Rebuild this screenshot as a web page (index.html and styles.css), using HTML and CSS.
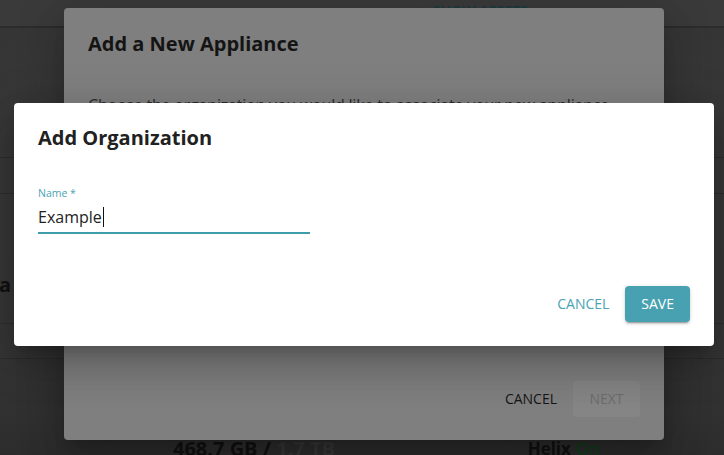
FILE: index.html
```html
<!DOCTYPE html>
<html>
<head>
<meta charset="utf-8">
<link rel="stylesheet" href="styles.css">
</head>
<body>
<div class="page">
  <div class="topbar">
    <div class="show-assets">
      <svg class="sa-icon" width="12" height="12" viewBox="0 0 12 12"><path d="M1 8 L4 5 L7 8 M5 8 L8 5 L11 8" fill="none" stroke="#1c3a3f" stroke-width="1.6"/></svg>
      <span>SHOW ASSETS</span>
    </div>
  </div>
  <div class="row row-a"></div>
  <div class="row row-b"></div>
  <div class="row row-c"><span class="section-head">a</span></div>
  <div class="row row-d"></div>
  <div class="row row-e">
    <span class="stat"><b>468.7 GB / </b><span class="muted">1.7 TB</span></span>
    <span class="helix"><b>Helix </b><span class="on">On</span></span>
  </div>
</div>

<div class="back-dialog">
  <h2 class="back-title">Add a New Appliance</h2>
  <p class="back-text">Choose the organization you would like to associate your new appliance</p>
  <div class="back-actions">
    <span class="back-cancel">CANCEL</span>
    <span class="back-next">NEXT</span>
  </div>
</div>

<div class="dialog">
  <h2 class="dialog-title">Add Organization</h2>
  <div class="dialog-body">
    <div class="field">
      <label class="field-label">Name *</label>
      <div class="field-input"><span class="value">Example</span><span class="caret"></span></div>
    </div>
  </div>
  <div class="dialog-actions">
    <span class="btn-text">CANCEL</span>
    <span class="btn-save">SAVE</span>
  </div>
</div>
</body>
</html>
```
FILE: styles.css
```css
* { box-sizing: border-box; }
html, body { margin: 0; padding: 0; }
body {
  width: 724px;
  height: 455px;
  overflow: hidden;
  position: relative;
  font-family: "Open Sans", "Noto Sans", sans-serif;
  background: radial-gradient(ellipse 70% 80% at 50% 45%, #404040 0%, #3a3a3a 60%, #323232 100%);
}
.page { width: 724px; height: 455px; display: flex; flex-direction: column; overflow: hidden; }
.topbar {
  flex-shrink: 0;
  height: 28px;
  border-bottom: 2px solid #2c2c2c;
  background: #3a3a3a;
  display: flex;
  justify-content: flex-end;
  padding-right: 196px;
}
.show-assets {
  display: flex;
  align-items: flex-start;
  gap: 8px;
  color: #1c3a3f;
  font-weight: 700;
  font-size: 14px;
  line-height: 19px;
  padding-top: 1px;
}
.sa-icon { margin-top: 3px; }
.row { border-bottom: 1px solid #2d2d2d; flex-shrink: 0; }
.row-a { height: 130px; }
.row-b { height: 36px; }
.row-c { height: 130px; display: flex; align-items: flex-start; }
.section-head { font-weight: 700; font-size: 20px; line-height: 27px; color: #111; margin-top: 77px; margin-left: -1px; }
.row-d { height: 35px; }
.row-e {
  flex: 1 0 auto;
  border-bottom: 0;
  display: flex;
  align-items: flex-start;
  padding-top: 76px;
  font-size: 20px;
  line-height: 27px;
  background: linear-gradient(#353535, #2c2c2c);
}
.stat { margin-left: 173px; color: #111; }
.stat .muted { color: #383838; font-weight: 700; }
.helix { margin-left: auto; margin-right: 124px; color: #111; font-size: 17px; }
.helix .on { color: #173b1f; font-weight: 700; }

.back-dialog {
  position: absolute;
  left: 64px;
  top: 8px;
  width: 600px;
  height: 432px;
  background: #7f7f7f;
  border-radius: 4px;
  box-shadow: 0 11px 15px -7px rgba(0,0,0,.2), 0 24px 38px 3px rgba(0,0,0,.14), 0 9px 46px 8px rgba(0,0,0,.12);
  display: flex;
  flex-direction: column;
  padding: 0 24px 23px;
}
.back-title { margin: 22px 0 0; font-size: 20px; line-height: 27px; font-weight: 700; color: #141414; }
.back-text { margin: 36px 0 0; font-size: 16px; line-height: 24px; color: #2a2a2a; letter-spacing: -0.2px; }
.back-actions { margin-top: auto; display: flex; justify-content: flex-end; align-items: center; gap: 8px; }
.back-cancel { font-size: 14px; line-height: 20px; color: #161616; padding: 8px; }
.back-next {
  font-size: 14px; line-height: 20px; color: #6c6c6c;
  background: #858585; border-radius: 4px;
  height: 36px; padding: 8px 16px; width: 67px; text-align: center;
}

.dialog {
  position: absolute;
  left: 14px;
  top: 103px;
  width: 700px;
  height: 243px;
  background: #fff;
  border-radius: 4px;
  box-shadow: 0 11px 15px -7px rgba(0,0,0,.2), 0 24px 38px 3px rgba(0,0,0,.14), 0 9px 46px 8px rgba(0,0,0,.12);
  display: flex;
  flex-direction: column;
}
.dialog-title { margin: 0; padding: 21px 24px 0; font-size: 20px; line-height: 27px; font-weight: 700; color: #212121; }
.dialog-body { padding: 0 24px; }
.field { width: 272px; margin-top: 36px; display: flex; flex-direction: column; }
.field-label { font-size: 10.5px; line-height: 12px; color: #4aa3b2; }
.field-input {
  margin-top: 8px;
  font-size: 16px;
  line-height: 19px;
  color: #222;
  padding-bottom: 5px;
  border-bottom: 2px solid #3f9cab;
  display: flex;
  align-items: center;
}
.caret { display: inline-block; width: 1px; height: 20px; background: #111; margin-left: 1px; }
.dialog-actions {
  margin-top: auto;
  padding: 0 24px 24px;
  display: flex;
  justify-content: flex-end;
  align-items: center;
  gap: 8px;
}
.btn-text { font-size: 14px; line-height: 20px; color: #4aa3b2; padding: 8px; }
.btn-save {
  font-size: 14px; line-height: 20px; color: #fff;
  background: #48a1b1; border-radius: 4px;
  height: 36px; padding: 8px 16px;
  box-shadow: 0 3px 1px -2px rgba(0,0,0,.2), 0 2px 2px 0 rgba(0,0,0,.14), 0 1px 5px 0 rgba(0,0,0,.12);
}
```
